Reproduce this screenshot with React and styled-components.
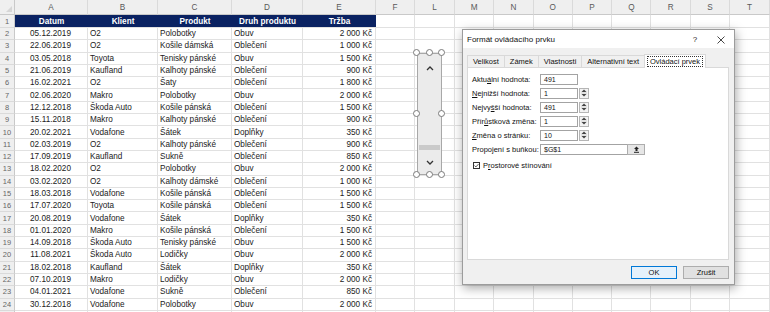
import React from "react";
import styled, { createGlobalStyle } from "styled-components";

const GlobalStyle = createGlobalStyle`
  html, body { margin: 0; padding: 0; background: #fff; }
  body { font-family: "Liberation Sans", Arial, sans-serif; overflow: hidden; }
  * { box-sizing: border-box; }
`;

const LETTERS = ["A", "B", "C", "D", "E", "F", "L", "M", "N", "O", "P", "Q", "R", "S", "T"];
const HEADERS = ["Datum", "Klient", "Produkt", "Druh produktu", "Tržba"];

const DATA = [
  ["05.12.2019", "O2", "Polobotky", "Obuv", "2 000 Kč"],
  ["22.06.2019", "O2", "Košile dámská", "Oblečení", "1 000 Kč"],
  ["03.05.2018", "Toyota", "Tenisky pánské", "Obuv", "1 500 Kč"],
  ["21.06.2019", "Kaufland", "Kalhoty pánské", "Oblečení", "900 Kč"],
  ["16.02.2021", "O2", "Šaty", "Oblečení", "1 800 Kč"],
  ["02.06.2020", "Makro", "Polobotky", "Obuv", "2 000 Kč"],
  ["12.12.2018", "Škoda Auto", "Košile pánská", "Oblečení", "1 500 Kč"],
  ["15.11.2018", "Makro", "Kalhoty pánské", "Oblečení", "900 Kč"],
  ["20.02.2021", "Vodafone", "Šátek", "Doplňky", "350 Kč"],
  ["02.03.2019", "O2", "Kalhoty pánské", "Oblečení", "900 Kč"],
  ["17.09.2019", "Kaufland", "Sukně", "Oblečení", "850 Kč"],
  ["18.02.2020", "O2", "Polobotky", "Obuv", "2 000 Kč"],
  ["03.02.2020", "O2", "Kalhoty dámské", "Oblečení", "1 000 Kč"],
  ["18.03.2018", "Vodafone", "Košile pánská", "Oblečení", "1 500 Kč"],
  ["17.07.2020", "Toyota", "Košile pánská", "Oblečení", "1 500 Kč"],
  ["20.08.2019", "Vodafone", "Šátek", "Doplňky", "350 Kč"],
  ["01.01.2020", "Makro", "Košile pánská", "Oblečení", "1 500 Kč"],
  ["14.09.2018", "Škoda Auto", "Tenisky pánské", "Obuv", "1 500 Kč"],
  ["11.08.2021", "Škoda Auto", "Lodičky", "Obuv", "2 000 Kč"],
  ["18.02.2018", "Kaufland", "Šátek", "Doplňky", "350 Kč"],
  ["07.10.2019", "Makro", "Lodičky", "Obuv", "2 000 Kč"],
  ["04.01.2021", "Vodafone", "Sukně", "Oblečení", "850 Kč"],
  ["30.12.2018", "Vodafone", "Polobotky", "Obuv", "2 000 Kč"],
];

const ALIGN = ["center", "left", "left", "left", "right"];
const EMPTY_COLS = 10;

const Page = styled.div`
  position: relative;
  width: 770px;
  height: 312px;
  overflow: hidden;
`;

const Sheet = styled.div`
  display: grid;
  grid-template-columns: 15px 73px 70px 74px 71px 73px 39px 40px repeat(7, 39.3px) 1fr;
  grid-template-rows: 15px 13px repeat(23, 12.3px) 12px;
  font-size: 8.2px;
  color: #222;
`;

const Corner = styled.div`
  background: #efefef;
  border-right: 1px solid #c9c9c9;
  border-bottom: 1px solid #c9c9c9;
  position: relative;
  &::after {
    content: "";
    position: absolute;
    right: 2px;
    bottom: 2px;
    border-left: 6px solid transparent;
    border-bottom: 6px solid #d6d6d6;
  }
`;

const ColHead = styled.div`
  background: #efefef;
  border-right: 1px solid #dadada;
  border-bottom: 1px solid #c9c9c9;
  color: #595959;
  display: flex;
  align-items: center;
  justify-content: center;
`;

const RowNum = styled.div`
  background: #efefef;
  border-right: 1px solid #c9c9c9;
  border-bottom: 1px solid #dadada;
  color: #666;
  display: flex;
  align-items: center;
  justify-content: center;
  font-size: 7.5px;
`;

const TitleCell = styled.div`
  background: #0a2262;
  color: #fff;
  font-weight: bold;
  display: flex;
  align-items: center;
  justify-content: center;
  border-bottom: 1px solid #e1e1e1;
`;

const Cell = styled.div`
  border-right: 1px solid #e1e1e1;
  border-bottom: 1px solid #e1e1e1;
  display: flex;
  align-items: center;
  white-space: nowrap;
  overflow: hidden;
  padding: 0 3px 0 2px;
  justify-content: ${(p) =>
    p.$align === "center" ? "center" : p.$align === "right" ? "flex-end" : "flex-start"};
`;

/* floating scrollbar form control (selected) */
const Control = styled.div`
  position: absolute;
  left: 417px;
  top: 53px;
  width: 25px;
  height: 122px;
  background: #ebebeb;
  border: 1px solid #a8a8a8;
`;

const Chevron = styled.svg`
  position: absolute;
  left: 8px;
  top: ${(p) => p.$top}px;
`;

const Thumb = styled.div`
  position: absolute;
  left: 1px;
  right: 1px;
  top: 91px;
  height: 5px;
  background: #cacaca;
`;

const Handle = styled.div`
  position: absolute;
  width: 7px;
  height: 7px;
  border-radius: 50%;
  background: #fff;
  border: 1px solid #7a7a7a;
  left: ${(p) => p.$x - 4}px;
  top: ${(p) => p.$y - 4}px;
`;

/* dialog */
const Dialog = styled.div`
  position: absolute;
  left: 462px;
  top: 29px;
  width: 273px;
  height: 256px;
  background: #f0f0f0;
  border: 1px solid #9c9c9c;
  box-shadow: 1px 3px 10px rgba(0, 0, 0, 0.35);
  display: flex;
  flex-direction: column;
  font-size: 7.5px;
  color: #111;
`;

const TitleBar = styled.div`
  height: 18px;
  background: #fff;
  display: flex;
  align-items: center;
  padding: 1px 0 0 4px;
  font-size: 8px;
`;

const Title = styled.span`
  flex: 1;
`;

const TitleBtn = styled.div`
  width: 26px;
  display: flex;
  justify-content: center;
  align-items: center;
  font-size: 8px;
  color: #222;
`;

const Body = styled.div`
  flex: 1;
  display: flex;
  flex-direction: column;
  padding: 6px 5px 0 4px;
`;

const Tabs = styled.div`
  display: flex;
  align-items: flex-end;
  height: 13px;
  padding-left: 1px;
`;

const Tab = styled.div`
  height: ${(p) => (p.$active ? 14 : 12)}px;
  padding: 0 ${(p) => (p.$active ? 2 : 5)}px;
  display: flex;
  align-items: center;
  background: ${(p) => (p.$active ? "#fff" : "#f0f0f0")};
  border: 1px solid #d9d9d9;
  border-bottom: none;
  margin-left: -1px;
  margin-bottom: ${(p) => (p.$active ? -1 : 0)}px;
  position: relative;
  z-index: ${(p) => (p.$active ? 1 : 0)};
`;

const Focus = styled.span`
  border: 1px dotted #333;
  padding: 0 2px;
  line-height: 9px;
`;

const Panel = styled.div`
  height: 193px;
  background: #fff;
  border: 1px solid #d9d9d9;
  padding: 4px 4px;
`;

const FormRow = styled.div`
  display: grid;
  grid-template-columns: 68px auto;
  align-items: center;
  height: 14px;
`;

const Field = styled.div`
  display: flex;
  align-items: center;
`;

const Input = styled.div`
  width: ${(p) => p.$w}px;
  height: 11px;
  border: 1px solid #a3a3a3;
  background: #fff;
  font-size: 7px;
  display: flex;
  align-items: center;
  padding-left: 3px;
  position: relative;
`;

const Spin = styled.div`
  width: 10px;
  height: 11px;
  margin-left: 1px;
  border: 1px solid #b5b5b5;
  background: #f3f3f3;
  display: flex;
  align-items: center;
  justify-content: center;
`;

const RefBtn = styled.div`
  position: absolute;
  right: -1px;
  top: -1px;
  width: 18px;
  height: 11px;
  border: 1px solid #adadad;
  background: #e6e6e6;
  display: flex;
  align-items: center;
  justify-content: center;
`;

const CheckRow = styled.div`
  display: flex;
  align-items: center;
  gap: 3px;
  margin-top: 3px;
  height: 12px;
  padding-left: 1px;
`;

const Box = styled.div`
  width: 7px;
  height: 7px;
  border: 1px solid #333;
  background: #fff;
  display: flex;
  align-items: center;
  justify-content: center;
`;

const Footer = styled.div`
  flex: 1;
  display: flex;
  align-items: center;
  justify-content: flex-end;
  gap: 6px;
`;

const Button = styled.div`
  width: 46px;
  height: 13px;
  display: flex;
  align-items: center;
  justify-content: center;
  font-size: 7.5px;
  border: 1px solid ${(p) => (p.$primary ? "#0078d7" : "#adadad")};
  background: ${(p) => (p.$primary ? "#e5f1fb" : "#e1e1e1")};
`;

const SpinIcon = () => (
  <svg width="6" height="8" viewBox="0 0 6 8">
    <path d="M3 0.5 L5.5 3 H0.5 Z" fill="#444" />
    <path d="M0 4 H6" stroke="#bbb" strokeWidth="0.6" />
    <path d="M3 7.5 L5.5 5 H0.5 Z" fill="#444" />
  </svg>
);

const FORM = [
  { label: <>Aktu<u>á</u>lní hodnota:</>, value: "491", spin: false },
  { label: <><u>N</u>ejnižší hodnota:</>, value: "1", spin: true },
  { label: <>Nejvy<u>š</u>ší hodnota:</>, value: "491", spin: true },
  { label: <>Přír<u>ů</u>stková změna:</>, value: "1", spin: true },
  { label: <><u>Z</u>měna o stránku:</>, value: "10", spin: true },
];

const HANDLES = [
  [0, 0], [12.5, 0], [25, 0],
  [0, 61], [25, 61],
  [0, 122], [12.5, 122], [25, 122],
];

const emptyCells = (n, prefix) =>
  Array.from({ length: n }).map((_, i) => <Cell key={prefix + i} />);

export default function App() {
  return (
    <Page>
      <GlobalStyle />
      <Sheet>
        <Corner />
        {LETTERS.map((l) => (
          <ColHead key={l}>{l}</ColHead>
        ))}

        <RowNum>1</RowNum>
        {HEADERS.map((h) => (
          <TitleCell key={h}>{h}</TitleCell>
        ))}
        {emptyCells(EMPTY_COLS, "h")}

        {DATA.map((row, r) => (
          <React.Fragment key={r}>
            <RowNum>{r + 2}</RowNum>
            {row.map((v, c) => (
              <Cell key={c} $align={ALIGN[c]}>
                {v.replace(/(\d) (\d)/, "$1\u00a0$2")}
              </Cell>
            ))}
            {emptyCells(EMPTY_COLS, "e")}
          </React.Fragment>
        ))}

        <RowNum />
        {emptyCells(EMPTY_COLS + 5, "l")}
      </Sheet>

      <Control>
        <Chevron $top={12} width="8" height="5" viewBox="0 0 8 5">
          <path d="M1 4 L4 1 L7 4" fill="none" stroke="#333" strokeWidth="1.3" />
        </Chevron>
        <Thumb />
        <Chevron $top={106} width="8" height="5" viewBox="0 0 8 5">
          <path d="M1 1 L4 4 L7 1" fill="none" stroke="#333" strokeWidth="1.3" />
        </Chevron>
        {HANDLES.map(([x, y], i) => (
          <Handle key={i} $x={x - 1} $y={y - 1} />
        ))}
      </Control>

      <Dialog>
        <TitleBar>
          <Title>Formát ovládacího prvku</Title>
          <TitleBtn>?</TitleBtn>
          <TitleBtn>
            <svg width="8" height="8" viewBox="0 0 8 8">
              <path d="M0.5 0.5 L7.5 7.5 M7.5 0.5 L0.5 7.5" stroke="#333" strokeWidth="0.9" />
            </svg>
          </TitleBtn>
        </TitleBar>
        <Body>
          <Tabs>
            <Tab>Velikost</Tab>
            <Tab>Zámek</Tab>
            <Tab>Vlastnosti</Tab>
            <Tab>Alternativní text</Tab>
            <Tab $active>
              <Focus>Ovládací prvek</Focus>
            </Tab>
          </Tabs>
          <Panel>
            {FORM.map((f, i) => (
              <FormRow key={i}>
                <span>{f.label}</span>
                <Field>
                  <Input $w={38}>{f.value}</Input>
                  {f.spin && (
                    <Spin>
                      <SpinIcon />
                    </Spin>
                  )}
                </Field>
              </FormRow>
            ))}
            <FormRow>
              <span>
                Propo<u>j</u>ení s buňkou:
              </span>
              <Field>
                <Input $w={105}>
                  $G$1
                  <RefBtn>
                    <svg width="7" height="7" viewBox="0 0 7 7">
                      <path d="M3.5 0.5 L6 3 H4.5 V5 H2.5 V3 H1 Z" fill="#222" />
                      <path d="M1 6.3 H6" stroke="#222" strokeWidth="1" />
                    </svg>
                  </RefBtn>
                </Input>
              </Field>
            </FormRow>
            <CheckRow>
              <Box>
                <svg width="6" height="5" viewBox="0 0 6 5">
                  <path d="M0.6 2.6 L2.3 4.2 L5.4 0.8" fill="none" stroke="#222" strokeWidth="0.9" />
                </svg>
              </Box>
              <span>
                P<u>r</u>ostorové stínování
              </span>
            </CheckRow>
          </Panel>
          <Footer>
            <Button $primary>OK</Button>
            <Button>Zrušit</Button>
          </Footer>
        </Body>
      </Dialog>
    </Page>
  );
}
